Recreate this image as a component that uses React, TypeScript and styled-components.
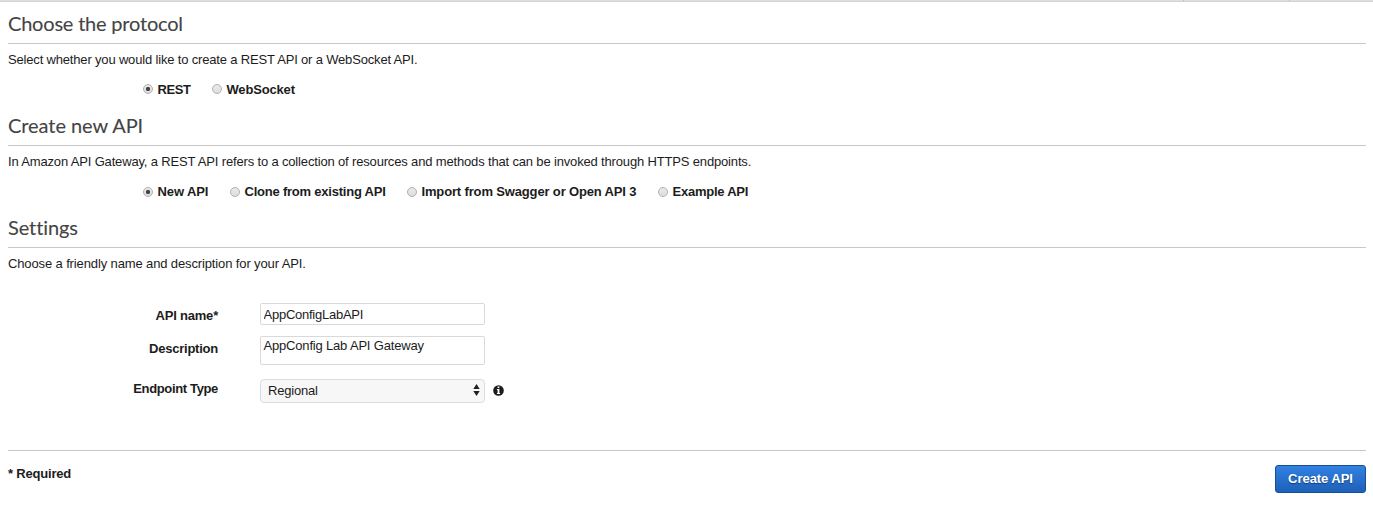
import React from "react";
import styled, { createGlobalStyle } from "styled-components";

const GlobalStyle = createGlobalStyle`
  * { box-sizing: border-box; }
  body {
    margin: 0;
    background: #fff;
    color: #1c1c1c;
    font: 13px/18px "Liberation Sans", Arial, sans-serif;
  }
`;

const Page = styled.div`
  height: 517px;
  display: flex;
  flex-direction: column;
  overflow: hidden;
`;

const TopEdge = styled.div`
  height: 2px;
  flex: none;
  display: flex;
  justify-content: flex-end;
  gap: 105px;
  padding-right: 83px;
  background: #dedede;
  border-bottom: 1px solid #d4d4d4;
`;

const Tick = styled.span`
  width: 1px;
  height: 1px;
  background: #bbb;
`;

const Content = styled.main`
  padding: 0 7px 0 8px;
`;

const Section = styled.section<{ $height?: number }>`
  height: ${(p) => p.$height ?? 102}px;
`;

const Heading = styled.h1<{ $spacing: number }>`
  margin: 0;
  height: 42px;
  padding-top: 7px;
  border-bottom: 1px solid #c8c8c8;
  color: #444;
  font: 400 20px/28px Lato, sans-serif;
  font-variant-ligatures: none;
  -webkit-text-stroke: 0.1px #444;
  letter-spacing: ${(p) => p.$spacing}px;
`;

const Intro = styled.p<{ $spacing: number }>`
  margin: 7px 0 0;
  white-space: nowrap;
  letter-spacing: ${(p) => p.$spacing}px;
`;

const Options = styled.div`
  display: flex;
  margin: 12px 0 0 135px;
`;

const Option = styled.label<{ $width: number; $spacing: number }>`
  display: flex;
  align-items: center;
  width: ${(p) => p.$width}px;
  flex: none;
  font-weight: 700;
  white-space: nowrap;
  letter-spacing: ${(p) => p.$spacing}px;
`;

const Radio = styled.input<{ $lift: number }>`
  appearance: none;
  width: 10px;
  height: 10px;
  margin: 0 4.5px ${(p) => p.$lift}px 0;
  flex: none;
  border: 1px solid #b0b0b0;
  border-radius: 50%;
  background: linear-gradient(#e9e9e9, #dedede);
  &:checked {
    background: radial-gradient(circle, #444 0 1.8px, transparent 2.5px),
      linear-gradient(#e9e9e9, #dedede);
  }
`;

const Form = styled.form`
  padding-top: 21px;
  height: 168px;
`;

const Field = styled.div<{ $height: number }>`
  display: flex;
  height: ${(p) => p.$height}px;
`;

const FieldLabel = styled.label<{ $top: number; $spacing: number }>`
  width: 210px;
  margin-right: 42px;
  padding-top: ${(p) => p.$top}px;
  text-align: right;
  font-weight: 700;
  letter-spacing: ${(p) => p.$spacing}px;
`;

const TextInput = styled.input`
  width: 225px;
  height: 22px;
  padding: 1px 3px 0 2.5px;
  border: 1px solid #d9d9d9;
  border-radius: 2px;
  color: #1c1c1c;
  font: 13px/18px "Liberation Sans", Arial, sans-serif;
  letter-spacing: -0.25px;
`;

const TextArea = styled.textarea`
  width: 225px;
  height: 29px;
  padding: 0 3px 0 2.5px;
  border: 1px solid #d9d9d9;
  border-radius: 2px;
  resize: none;
  overflow: hidden;
  color: #1c1c1c;
  font: 13px/18px "Liberation Sans", Arial, sans-serif;
  letter-spacing: -0.18px;
`;

const Select = styled.div`
  display: flex;
  align-items: center;
  justify-content: space-between;
  width: 225px;
  height: 24px;
  padding: 0 4px 0 7px;
  border: 1px solid #dcdcdc;
  border-radius: 4px;
  background: #f7f7f7;
  letter-spacing: -0.2px;
`;

const SelectArrows = styled.svg`
  margin-bottom: 2px;
`;

const InfoIcon = styled.svg`
  margin: 6px 0 0 8px;
`;

const Footer = styled.footer`
  display: flex;
  justify-content: space-between;
  border-top: 1px solid #c8c8c8;
  padding-top: 14px;
`;

const Required = styled.strong`
  line-height: 18px;
  letter-spacing: -0.2px;
`;

const CreateButton = styled.button`
  width: 91px;
  height: 28px;
  padding: 0;
  border: 1px solid #174f91;
  border-radius: 3px;
  background: linear-gradient(#3281e3, #1d60b8);
  color: #fff;
  font: 700 13px/18px "Liberation Sans", Arial, sans-serif;
  letter-spacing: -0.05px;
  text-shadow: 0 1px 1px #123c70;
`;

type Choice = { text: string; width: number; spacing: number };

function RadioRow({ name, choices, lift = 1 }: { name: string; choices: Choice[]; lift?: number }) {
  return (
    <Options>
      {choices.map((c, i) => (
        <Option key={c.text} $width={c.width} $spacing={c.spacing}>
          <Radio type="radio" name={name} defaultChecked={i === 0} $lift={lift} />
          {c.text}
        </Option>
      ))}
    </Options>
  );
}

export default function App() {
  return (
    <Page>
      <GlobalStyle />
      <TopEdge>
        <Tick />
        <Tick />
      </TopEdge>
      <Content>
        <Section>
          <Heading $spacing={-0.2}>Choose the protocol</Heading>
          <Intro $spacing={-0.172}>Select whether you would like to create a REST API or a WebSocket API.</Intro>
          <RadioRow
            name="protocol"
            lift={2}
            choices={[
              { text: "REST", width: 69, spacing: -0.45 },
              { text: "WebSocket", width: 90, spacing: -0.17 },
            ]}
          />
        </Section>
        <Section>
          <Heading $spacing={-0.05}>Create new API</Heading>
          <Intro $spacing={-0.16}>
            In Amazon API Gateway, a REST API refers to a collection of resources and methods that can be
            invoked through HTTPS endpoints.
          </Intro>
          <RadioRow
            name="source"
            choices={[
              { text: "New API", width: 87, spacing: -0.1 },
              { text: "Clone from existing API", width: 177, spacing: -0.22 },
              { text: "Import from Swagger or Open API 3", width: 251, spacing: -0.15 },
              { text: "Example API", width: 100, spacing: -0.24 },
            ]}
          />
        </Section>
        <Section $height={76}>
          <Heading $spacing={-0.1}>Settings</Heading>
          <Intro $spacing={-0.125}>Choose a friendly name and description for your API.</Intro>
        </Section>
        <Form onSubmit={(e) => e.preventDefault()}>
          <Field $height={33}>
            <FieldLabel $top={4} $spacing={-0.2}>API name*</FieldLabel>
            <TextInput defaultValue="AppConfigLabAPI" />
          </Field>
          <Field $height={43}>
            <FieldLabel $top={4} $spacing={-0.23}>Description</FieldLabel>
            <TextArea defaultValue="AppConfig Lab API Gateway" />
          </Field>
          <Field $height={24}>
            <FieldLabel $top={1} $spacing={-0.35}>Endpoint Type</FieldLabel>
            <Select>
              Regional
              <SelectArrows width="7" height="12" viewBox="0 0 7 12" fill="#222">
                <path d="M3.5 0 6.7 5H.3ZM3.5 12 .3 7h6.4Z" />
              </SelectArrows>
            </Select>
            <InfoIcon width="11" height="11" viewBox="0 0 11 11">
              <circle cx="5.5" cy="5.5" r="5.3" fill="#1c1c1c" />
              <path fill="#fff" d="M4.6 1.5h1.8V3H4.6ZM3.9 4h2.5v3.9h.7V9H3.9V7.9h.7V5h-.7Z" />
            </InfoIcon>
          </Field>
        </Form>
        <Footer>
          <Required>* Required</Required>
          <CreateButton>Create API</CreateButton>
        </Footer>
      </Content>
    </Page>
  );
}
